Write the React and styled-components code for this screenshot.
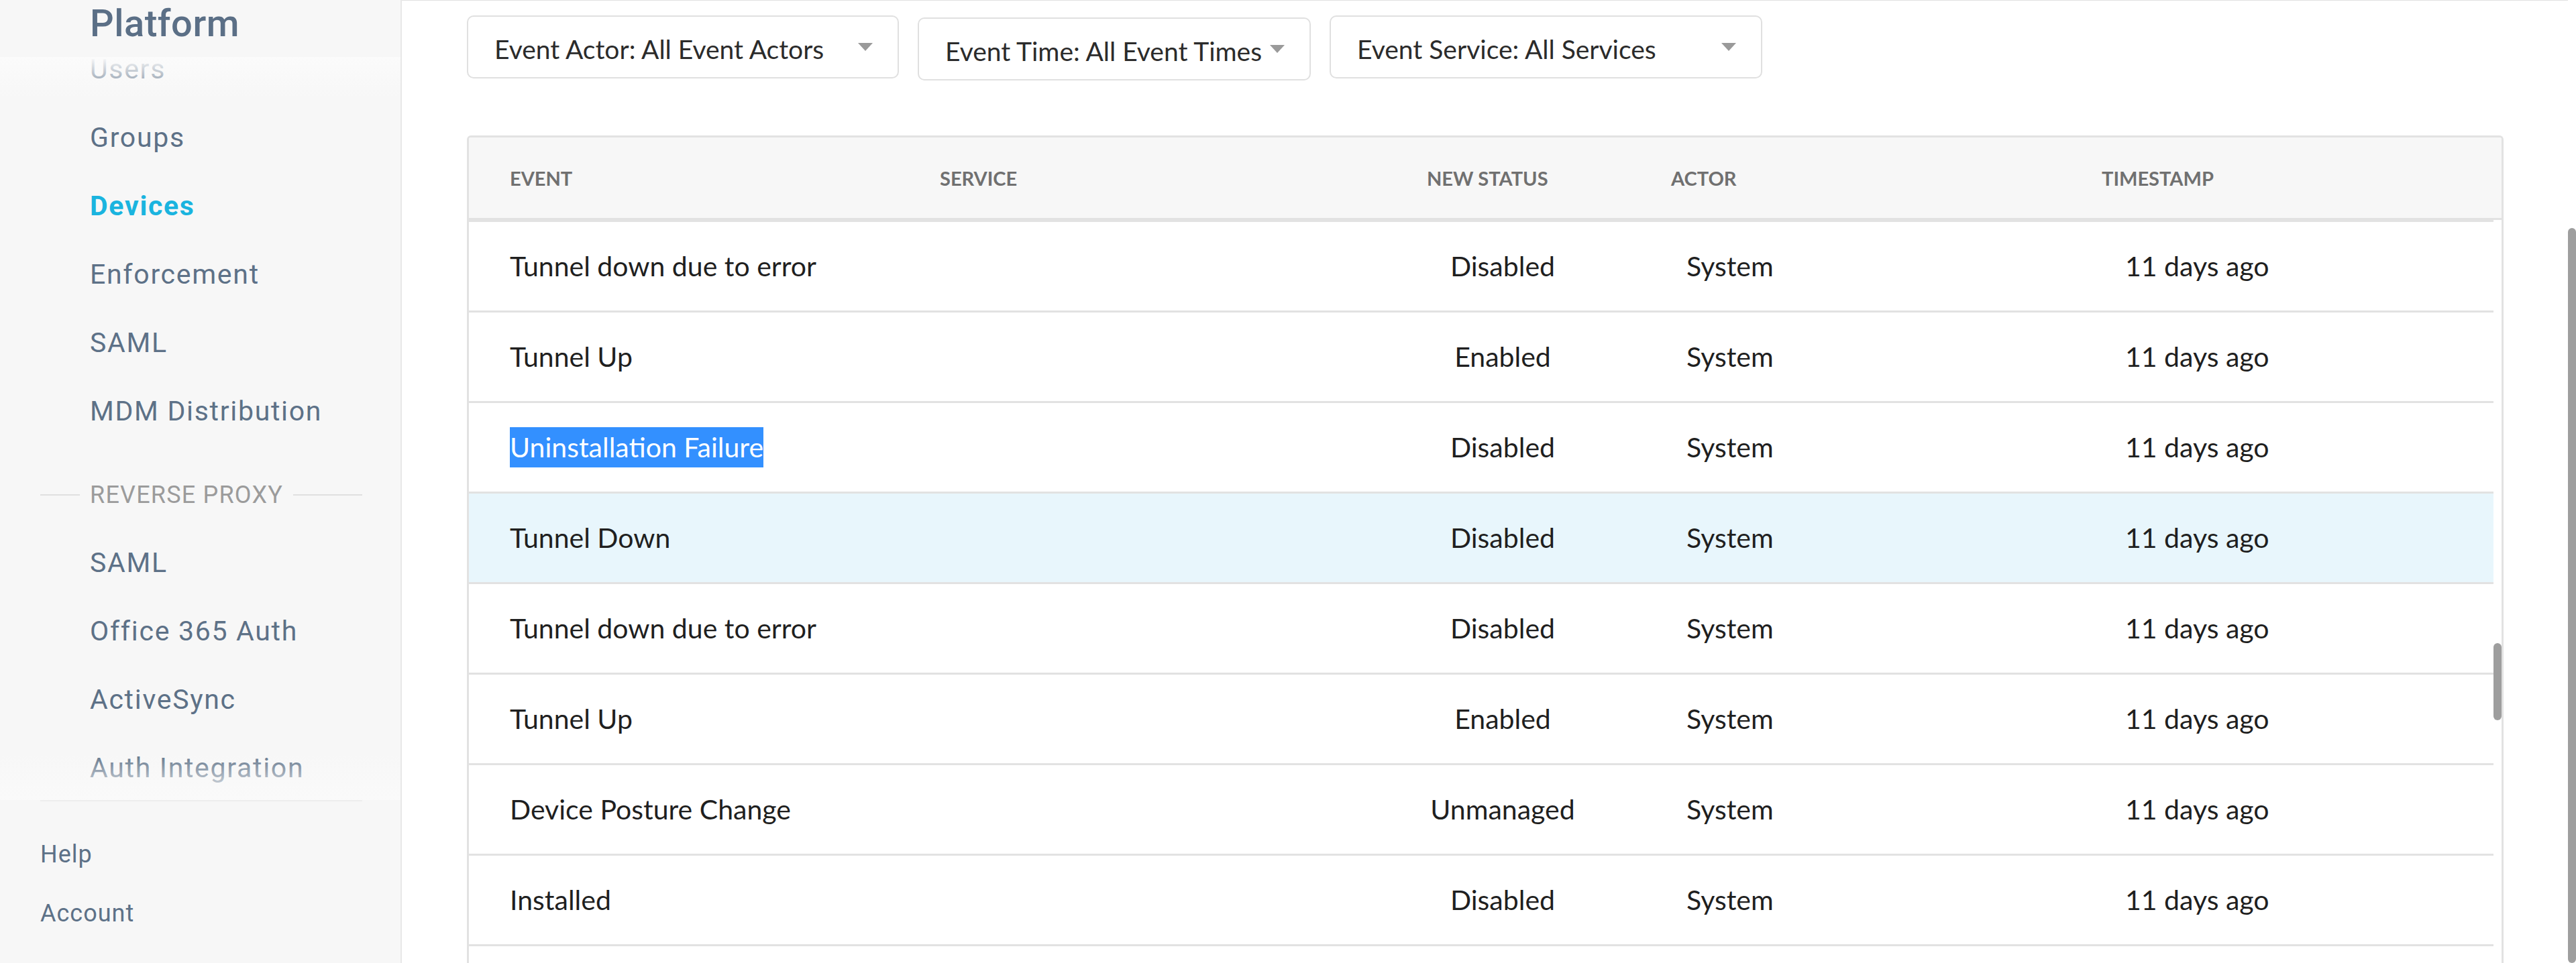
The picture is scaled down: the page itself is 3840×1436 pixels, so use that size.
import React, { useLayoutEffect, useRef } from 'react';
import styled, { createGlobalStyle } from 'styled-components';

const GlobalStyle = createGlobalStyle`
  html, body {
    margin: 0;
    padding: 0;
    height: 100%;
    overflow: hidden;
  }
  body {
    font-family: Lato, "Open Sans", sans-serif;
    background: #fff;
  }
  #root {
    height: 100%;
  }
  * {
    box-sizing: border-box;
  }
`;

const Shell = styled.div`
  display: flex;
  height: 100vh;
`;

/* sidebar */

const Sidebar = styled.aside`
  flex: 0 0 599px;
  display: flex;
  flex-direction: column;
  height: 100vh;
  background: #f7f7f7;
  border-right: 2px solid #e8e8e8;
  font-family: Roboto, "Liberation Sans", sans-serif;
`;

const Brand = styled.div`
  flex: none;
  height: 85px;
  padding-left: 134px;
  font-size: 56px;
  font-weight: 500;
  line-height: 70px;
  letter-spacing: 0.5px;
  color: #5b6f86;
`;

const NavArea = styled.div`
  position: relative;
  flex: 1;
  min-height: 0;

  &::before,
  &::after {
    content: '';
    position: absolute;
    left: 0;
    right: 0;
    z-index: 1;
    pointer-events: none;
  }
  &::before {
    top: 0;
    height: 62px;
    background: linear-gradient(rgba(251, 251, 251, 1), rgba(248, 248, 248, 0));
  }
  &::after {
    bottom: 0;
    height: 70px;
    background: linear-gradient(rgba(248, 248, 248, 0), rgba(250, 250, 250, 1));
  }
`;

const NavScroll = styled.nav`
  height: 100%;
  overflow: hidden;
`;

const NavItem = styled.div`
  height: 102px;
  padding-left: 134px;
  font-size: 41px;
  line-height: 102px;
  letter-spacing: 1.7px;
  white-space: nowrap;
  color: ${({ $active }) => ($active ? '#1ab4df' : '#5d7187')};
  font-weight: ${({ $active }) => ($active ? 700 : 400)};
`;

const NavSection = styled.div`
  display: flex;
  align-items: center;
  gap: 15px;
  height: 124px;
  padding: 24px 57px 0 60px;
  font-size: 36px;
  letter-spacing: 1.2px;
  color: #9b9b9b;
  white-space: nowrap;

  &::before,
  &::after {
    content: '';
    height: 2px;
    background: #e0e0e0;
  }
  &::before {
    flex: 0 0 59px;
  }
  &::after {
    flex: 1;
  }
`;

const Footer = styled.div`
  flex: none;
  margin: 0 57px 0 60px;
  padding: 35px 0 30px;
  border-top: 2px solid #eeeeee;
`;

const FooterLink = styled.div`
  height: 88px;
  font-size: 36px;
  line-height: 88px;
  letter-spacing: 1px;
  color: #5d7187;
`;

/* scroll tracks: thumbs are drawn, the real scrollbars are hidden */

const Track = styled.div`
  flex: 0 0 12px;
  display: flex;
  flex-direction: column;
  overflow: hidden;
`;

const Thumb = styled.div`
  flex: none;
  width: 12px;
  background: #9e9e9e;
  border-radius: 6px;
`;

const thumbFor = (viewport, content, offset) => ({
  marginTop: Math.round((offset / content) * viewport),
  height: Math.round((viewport * viewport) / content),
});

/* main */

const MainFrame = styled.div`
  flex: 1;
  min-width: 0;
  display: flex;
  height: 100vh;
`;

const Main = styled.main`
  flex: 1;
  min-width: 0;
  overflow: hidden;
`;

const PageHead = styled.header`
  height: 446px;
  padding: 120px 97px 0;
  border-bottom: 1px solid #e0e0e0;
`;

const PageTitle = styled.h1`
  margin: 0;
  font-size: 64px;
  font-weight: 400;
  color: #333;
`;

const Content = styled.div`
  padding: 0 96px 0 97px;
`;

const Filters = styled.div`
  display: flex;
  align-items: flex-start;
  gap: 28px;
  margin-top: 22px;
`;

const Select = styled.div`
  display: flex;
  align-items: center;
  justify-content: space-between;
  gap: 12px;
  width: ${({ $width }) => ($width ? `${$width}px` : 'auto')};
  height: 94px;
  margin-top: ${({ $drop }) => $drop || 0}px;
  padding: 6px 37px 0 39px;
  border: 2px solid #e0e0e0;
  border-radius: 10px;
  background: #fff;
  font-size: 39px;
  color: #2b2b2b;
  white-space: nowrap;
`;

const Caret = styled.span`
  flex: none;
  width: 0;
  height: 0;
  margin-top: -6px;
  border-left: 11px solid transparent;
  border-right: 11px solid transparent;
  border-top: 12px solid #9a9a9a;
`;

const Card = styled.section`
  margin-top: 82px;
  border: 3px solid #e2e2e2;
  border-bottom: none;
  border-radius: 6px 6px 0 0;
  background: #fff;
  overflow: hidden;
`;

const columns = '641px 726px 364px 642px 1fr';

const HeadRow = styled.div`
  display: grid;
  grid-template-columns: ${columns};
  align-items: center;
  height: 123px;
  background: #f7f7f7;
  border-bottom: 3px solid #e2e2e2;
`;

const HeadCell = styled.div`
  padding-left: 61px;
  font-size: 29px;
  font-weight: 700;
  color: #707070;
  text-transform: uppercase;
  white-space: nowrap;
`;

const BODY_HEIGHT = 1108;
const ROW_HEIGHT = 135;

const Body = styled.div`
  display: flex;
  height: ${BODY_HEIGHT}px;
`;

const BodyScroll = styled.div`
  flex: 1;
  min-width: 0;
  overflow: hidden;
`;

const Row = styled.div`
  display: grid;
  grid-template-columns: ${columns};
  align-items: center;
  height: ${ROW_HEIGHT}px;
  border-top: 3px solid #e2e2e2;
  background: ${({ $hover }) => ($hover ? '#e8f6fc' : '#fff')};
  font-size: 41px;
  color: #1f1f1f;
`;

const Cell = styled.div`
  line-height: 60px;
  white-space: nowrap;
  padding-left: ${({ $pad }) => $pad || 0}px;
  padding-right: ${({ $padRight }) => $padRight || 0}px;
  text-align: ${({ $center }) => ($center ? 'center' : 'left')};
`;

const Selected = styled.span`
  display: inline-block;
  background: #3390ff;
  color: #fff;
`;

const navItems = ['Users', 'Groups', 'Devices', 'Enforcement', 'SAML', 'MDM Distribution'];
const proxyItems = ['SAML', 'Office 365 Auth', 'ActiveSync', 'Auth Integration'];

const filters = [
  { label: 'Event Actor: All Event Actors', width: 644 },
  { label: 'Event Time: All Event Times', drop: 3 },
  { label: 'Event Service: All Services', width: 645 },
];

const headers = ['Event', 'Service', 'New Status', 'Actor', 'Timestamp'];

const shown = [
  { name: 'Tunnel down due to error', status: 'Disabled' },
  { name: 'Tunnel Up', status: 'Enabled' },
  { name: 'Uninstallation Failure', status: 'Disabled', selected: true },
  { name: 'Tunnel Down', status: 'Disabled', hover: true },
  { name: 'Tunnel down due to error', status: 'Disabled' },
  { name: 'Tunnel Up', status: 'Enabled' },
  { name: 'Device Posture Change', status: 'Unmanaged' },
  { name: 'Installed', status: 'Disabled' },
];

const cycle = [
  { name: 'Tunnel Down', status: 'Disabled' },
  { name: 'Tunnel down due to error', status: 'Disabled' },
  { name: 'Tunnel Up', status: 'Enabled' },
];

const FIRST_SHOWN = 45;
const events = Array.from({ length: 79 }, (_, i) => shown[i - FIRST_SHOWN] || cycle[i % cycle.length]);

const VIEWPORT = 1436;
const MAIN_CONTENT = 1881;
const MAIN_OFFSET = MAIN_CONTENT - VIEWPORT;
const BODY_OFFSET = FIRST_SHOWN * ROW_HEIGHT;

export default function App() {
  const navRef = useRef(null);
  const mainRef = useRef(null);
  const bodyRef = useRef(null);

  useLayoutEffect(() => {
    navRef.current.scrollTop = 33;
    mainRef.current.scrollTop = MAIN_OFFSET;
    bodyRef.current.scrollTop = BODY_OFFSET;
  }, []);

  return (
    <Shell>
      <GlobalStyle />
      <Sidebar>
        <Brand>Platform</Brand>
        <NavArea>
          <NavScroll ref={navRef}>
            {navItems.map((item) => (
              <NavItem key={item} $active={item === 'Devices'}>{item}</NavItem>
            ))}
            <NavSection>REVERSE PROXY</NavSection>
            {proxyItems.map((item) => (
              <NavItem key={item}>{item}</NavItem>
            ))}
          </NavScroll>
        </NavArea>
        <Footer>
          <FooterLink>Help</FooterLink>
          <FooterLink>Account</FooterLink>
        </Footer>
      </Sidebar>

      <MainFrame>
        <Main ref={mainRef}>
          <PageHead>
            <PageTitle>Device Events</PageTitle>
          </PageHead>
          <Content>
            <Filters>
              {filters.map((f) => (
                <Select key={f.label} $width={f.width} $drop={f.drop}>
                  <span>{f.label}</span>
                  <Caret />
                </Select>
              ))}
            </Filters>

            <Card>
              <HeadRow>
                {headers.map((h) => (
                  <HeadCell key={h}>{h}</HeadCell>
                ))}
              </HeadRow>
              <Body>
                <BodyScroll ref={bodyRef}>
                  {events.map((ev, i) => (
                    <Row key={i} $hover={ev.hover}>
                      <Cell $pad={61}>{ev.selected ? <Selected>{ev.name}</Selected> : ev.name}</Cell>
                      <Cell />
                      <Cell $center $padRight={16}>{ev.status}</Cell>
                      <Cell $pad={84}>System</Cell>
                      <Cell $pad={96}>11 days ago</Cell>
                    </Row>
                  ))}
                </BodyScroll>
                <Track>
                  <Thumb style={thumbFor(BODY_HEIGHT, events.length * ROW_HEIGHT, BODY_OFFSET)} />
                </Track>
              </Body>
            </Card>
          </Content>
        </Main>
        <Track>
          <Thumb style={thumbFor(VIEWPORT, MAIN_CONTENT, MAIN_OFFSET)} />
        </Track>
      </MainFrame>
    </Shell>
  );
}
